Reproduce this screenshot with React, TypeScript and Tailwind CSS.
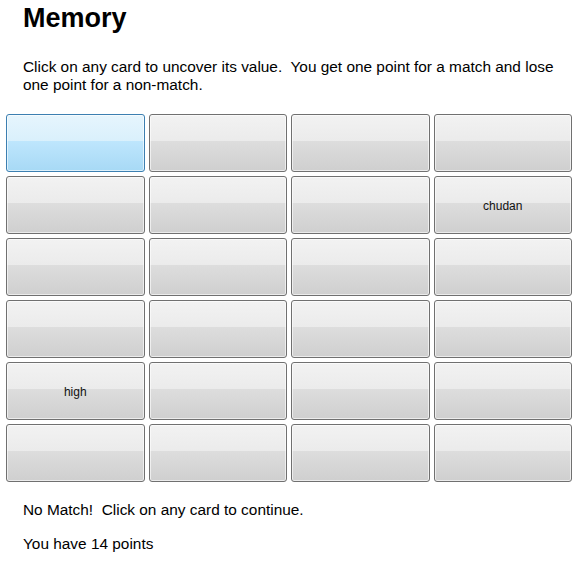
import React from "react";

const cards: string[] = [
  "", "", "", "",
  "", "", "", "chudan",
  "", "", "", "",
  "", "", "", "",
  "high", "", "", "",
  "", "", "", "",
];

export default function App() {
  return (
    <div className="w-[583px] h-[565px] bg-white text-black font-['Liberation_Sans',Arial,sans-serif] overflow-hidden">
      <h1 className="pl-[23px] pt-[3px] text-[27px] leading-[31px] font-bold">Memory</h1>
      <p className="pl-[23px] pr-[20px] mt-[24px] text-[15.4px] leading-[18.4px]">
        Click on any card to uncover its value.&nbsp; You get one point for a match and lose one point for a non-match.
      </p>
      <div className="mt-[19.4px] ml-[6px] w-[566px] grid grid-cols-4 gap-x-[4px] gap-y-[4px]">
        {cards.map((c, i) =>
          i === 0 ? (
            <div
              key={i}
              className="h-[58px] pt-[2px] rounded-[3px] border border-[#3c7fb1] shadow-[inset_0_0_0_1px_rgba(255,255,255,0.6)] bg-[linear-gradient(#e6f5fd_0%,#d9f0fc_47%,#bee6fd_47%,#a7d9f5_100%)] flex items-center justify-center text-[12px]"
            >
              {c}
            </div>
          ) : (
            <div
              key={i}
              className="h-[58px] pt-[2px] rounded-[3px] border border-[#707070] shadow-[inset_0_0_0_1px_rgba(255,255,255,0.6)] bg-[linear-gradient(#f2f2f2_0%,#ebebeb_47%,#dddddd_47%,#cfcfcf_100%)] flex items-center justify-center text-[12px] text-[#111]"
            >
              {c}
            </div>
          )
        )}
      </div>
      <p className="pl-[23px] mt-[18.5px] text-[15.4px] leading-[18.4px]">No Match!&nbsp; Click on any card to continue.</p>
      <p className="pl-[23px] mt-[16px] text-[15.4px] leading-[18.4px]">You have 14 points</p>
    </div>
  );
}
